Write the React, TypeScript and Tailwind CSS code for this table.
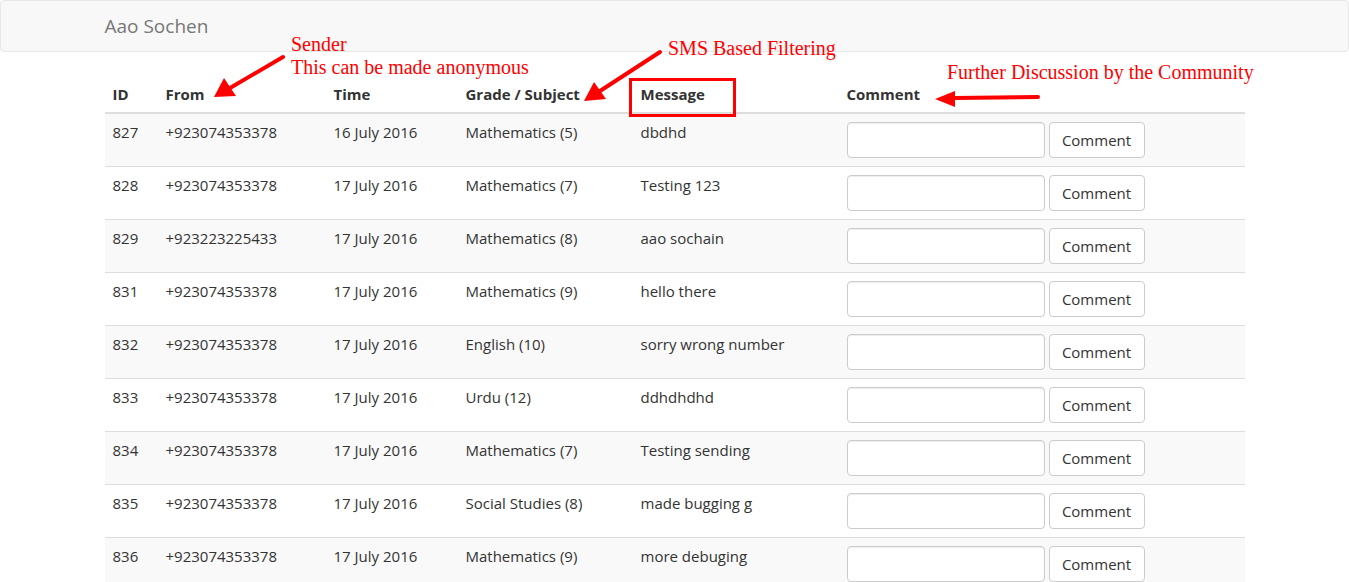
import React from 'react';

const rows = [
  ['827', '+923074353378', '16 July 2016', 'Mathematics (5)', 'dbdhd'],
  ['828', '+923074353378', '17 July 2016', 'Mathematics (7)', 'Testing 123'],
  ['829', '+923223225433', '17 July 2016', 'Mathematics (8)', 'aao sochain'],
  ['831', '+923074353378', '17 July 2016', 'Mathematics (9)', 'hello there'],
  ['832', '+923074353378', '17 July 2016', 'English (10)', 'sorry wrong number'],
  ['833', '+923074353378', '17 July 2016', 'Urdu (12)', 'ddhdhdhd'],
  ['834', '+923074353378', '17 July 2016', 'Mathematics (7)', 'Testing sending'],
  ['835', '+923074353378', '17 July 2016', 'Social Studies (8)', 'made bugging g'],
  ['836', '+923074353378', '17 July 2016', 'Mathematics (9)', 'more debuging'],
];

export default function App() {
  return (
    <div className="relative min-h-screen bg-white text-[15px] leading-[20px] text-[#333] font-['Open_Sans',sans-serif]">
      <nav className="h-[52px] bg-[#f8f8f8] border border-[#e7e7e7] rounded-[4px] mb-[24px]">
        <div className="w-[1170px] mx-auto px-[15px] h-full flex items-center">
          <span className="text-[19px] text-[#777]">Aao Sochen</span>
        </div>
      </nav>

      <div className="w-[1170px] mx-auto px-[15px]">
        <table className="w-full border-collapse">
          <thead>
            <tr className="border-b-2 border-[#ddd] text-left">
              <th className="p-2 w-[53px] font-bold">ID</th>
              <th className="p-2 w-[168px] font-bold">From</th>
              <th className="p-2 w-[132px] font-bold">Time</th>
              <th className="p-2 w-[175px] font-bold">Grade / Subject</th>
              <th className="p-2 w-[206px] font-bold">Message</th>
              <th className="p-2 font-bold">Comment</th>
            </tr>
          </thead>
          <tbody>
            {rows.map((r, i) => (
              <tr key={r[0]} className={`border-t border-[#ddd] ${i % 2 === 0 ? 'bg-[#f9f9f9]' : 'bg-white'}`}>
                {r.map((c, j) => (
                  <td key={j} className="p-2 align-top">{c}</td>
                ))}
                <td className="p-2 align-top">
                  <div className="flex gap-[4px]">
                    <input className="w-[198px] h-[36px] bg-white border border-[#ccc] rounded-[4px] shadow-[inset_0_1px_1px_rgba(0,0,0,0.075)] px-3" />
                    <button className="h-[36px] w-[96px] bg-white border border-[#ccc] rounded-[4px] text-[#333]">Comment</button>
                  </div>
                </td>
              </tr>
            ))}
          </tbody>
        </table>
      </div>

      {/* annotations */}
      <div className="absolute left-[291px] top-[33px] text-[#ff0000] text-[20px] leading-[23px] font-['Liberation_Serif',serif]">
        <div>Sender</div>
        <div>This can be made anonymous</div>
      </div>
      <div className="absolute left-[668px] top-[37px] text-[#ff0000] text-[20px] leading-[23px] font-['Liberation_Serif',serif]">
        SMS Based Filtering
      </div>
      <div className="absolute left-[947px] top-[61px] text-[#ff0000] text-[20px] leading-[23px] font-['Liberation_Serif',serif]">
        Further Discussion by the Community
      </div>
      <div className="absolute left-[629px] top-[78px] w-[107px] h-[39px] border-[3px] border-[#ff0000]" />

      <svg className="absolute left-0 top-0 pointer-events-none" width="1349" height="140">
        <g stroke="#ff0000" strokeWidth="4" strokeLinecap="round" fill="#ff0000">
          <line x1="283" y1="57" x2="230" y2="88" />
          <polygon points="214,97 224,78 236,96" stroke="none" />
          <line x1="660" y1="52" x2="600" y2="91" />
          <polygon points="584,101 594,82 606,99" stroke="none" />
          <line x1="1038" y1="97" x2="955" y2="98" />
          <polygon points="935,99 955,91 955,107" stroke="none" />
        </g>
      </svg>
    </div>
  );
}
